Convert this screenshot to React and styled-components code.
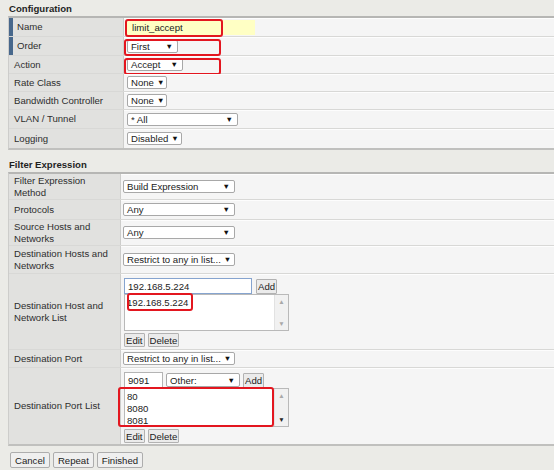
import React from "react";
import styled, { createGlobalStyle } from "styled-components";

const GlobalStyle = createGlobalStyle`
  * { box-sizing: border-box; }
  html, body { margin: 0; padding: 0; background: #ebebe7; }
  body {
    font-family: "Liberation Sans", Arial, sans-serif;
    font-size: 9.6px;
    color: #2b2b2b;
    overflow: hidden;
  }
`;

const Page = styled.div`
  width: 554px;
  height: 470px;
  overflow: hidden;
`;

const Heading = styled.div`
  font-weight: bold;
  font-size: 9.6px;
  line-height: 14px;
  padding: ${(p) => p.$top}px 0 0 9px;
  height: ${(p) => p.$top + 14}px;
  color: #1f1f1f;
`;

const Table = styled.div`
  margin-left: 8px;
  border-top: 2px solid #b6b6b4;
  border-bottom: 2px solid #c0c0be;
  border-left: 1px solid #cdcdcb;
`;

const Row = styled.div`
  display: grid;
  grid-template-columns: ${(p) => p.$label}px 1fr;
  height: ${(p) => p.$h}px;
  border-bottom: 1px solid #d8d8d6;
  &:last-child { border-bottom: none; }
`;

const Label = styled.div`
  display: flex;
  align-items: center;
  background: #e1e1df;
  border-right: 1px solid #cdcdcb;
  border-left: ${(p) => (p.$accent ? "4px solid #48688c" : "none")};
  padding: 0 4px 0 ${(p) => (p.$accent ? 4 : 5)}px;
  line-height: 12px;
  color: #2e2e2e;
`;

const Value = styled.div`
  position: relative;
  display: flex;
  flex-direction: ${(p) => (p.$stack ? "column" : "row")};
  align-items: ${(p) => (p.$stack ? "flex-start" : "center")};
  padding: ${(p) => (p.$stack ? "4px 0 0 3px" : `0 0 0 ${p.$pad ?? 3}px`)};
  background: #f5f5f5;
  box-shadow: inset 0 1px 0 #fdfdfd;
`;

const Select = styled.div`
  display: inline-flex;
  align-items: center;
  justify-content: space-between;
  width: ${(p) => p.$w}px;
  height: ${(p) => p.$h || 13}px;
  padding: 0 4px 0 3px;
  background: #fff;
  border: 1px solid #a8a8a8;
  border-radius: 2px;
  color: #222;
  white-space: nowrap;
  overflow: hidden;
  &::after {
    content: "▼";
    font-size: 7.5px;
    color: #111;
    margin-left: 3px;
  }
`;

const TextField = styled.div`
  display: flex;
  align-items: center;
  width: ${(p) => p.$w}px;
  height: ${(p) => p.$h || 16}px;
  padding-left: ${(p) => (p.$yellow ? 4 : 3)}px;
  background: ${(p) => (p.$yellow ? "#ffffc4" : "#fff")};
  border: 1px solid ${(p) => (p.$yellow ? "#ffffc4" : p.$focus ? "#86a4cf" : "#b4b4b4")};
  color: #222;
`;

const Line = styled.div`
  display: flex;
  align-items: center;
  gap: ${(p) => p.$gap ?? 3}px;
  margin-top: ${(p) => p.$mt ?? 0}px;
`;

const SmallButton = styled.div`
  display: inline-flex;
  align-items: center;
  height: ${(p) => p.$h || 14}px;
  padding: 0 1px;
  background: #ebebeb;
  border: 1px solid #b2b2b2;
  border-radius: 1px;
  color: #222;
`;

const ListBox = styled.div`
  display: flex;
  width: 165px;
  height: ${(p) => p.$h}px;
  background: #fff;
  border: 1px solid #b9b9b9;
`;

const Items = styled.div`
  flex: 1;
  padding: 2px 0 0 2px;
  line-height: 12px;
  color: #222;
`;

const ScrollBar = styled.div`
  width: 14px;
  display: flex;
  flex-direction: column;
  justify-content: space-between;
  align-items: center;
  padding: 3px 0 2px;
  background: #f1f1f1;
  border-left: 1px solid #e2e2e2;
`;

const Arrow = styled.span`
  font-size: 6.5px;
  line-height: 8px;
  color: ${(p) => (p.$dark ? "#222" : "#a8a8a8")};
`;

const Mark = styled.span`
  position: absolute;
  left: ${(p) => p.$l}px;
  top: ${(p) => p.$t}px;
  width: ${(p) => p.$w}px;
  height: ${(p) => p.$h}px;
  border: 2px solid #e3161f;
  border-radius: 3px;
  pointer-events: none;
`;

const Footer = styled.div`
  display: flex;
  gap: 3px;
  padding: 6px 0 0 10px;
`;

const Button = styled.div`
  display: inline-flex;
  align-items: center;
  height: 16px;
  padding: 0 4px;
  background: #efefef;
  border: 1px solid #adadad;
  border-radius: 2px;
  color: #222;
`;

const config = [
  { label: "Name", h: 19, accent: true },
  { label: "Order", h: 19, accent: true },
  { label: "Action", h: 18 },
  { label: "Rate Class", h: 18 },
  { label: "Bandwidth Controller", h: 18 },
  { label: "VLAN / Tunnel", h: 19 },
  { label: "Logging", h: 19 },
];

const configValue = (label) => {
  switch (label) {
    case "Name":
      return (
        <>
          <TextField $yellow $w={128} $h={15}>limit_accept</TextField>
          <Mark $l={1} $t={1} $w={98} $h={18} />
        </>
      );
    case "Order":
      return (
        <>
          <Select $w={51}>First</Select>
          <Mark $l={0} $t={2} $w={97} $h={17} />
        </>
      );
    case "Action":
      return (
        <>
          <Select $w={56}>Accept</Select>
          <Mark $l={0} $t={2} $w={97} $h={17} />
        </>
      );
    case "Rate Class":
    case "Bandwidth Controller":
      return <Select $w={40}>None</Select>;
    case "VLAN / Tunnel":
      return <Select $w={111}>* All</Select>;
    default:
      return <Select $w={55}>Disabled</Select>;
  }
};

export default function App() {
  return (
    <Page>
      <GlobalStyle />
      <Heading $top={2}>Configuration</Heading>
      <Table>
        {config.map((r) => (
          <Row key={r.label} $label={115} $h={r.h}>
            <Label $accent={r.accent}>{r.label}</Label>
            <Value>{configValue(r.label)}</Value>
          </Row>
        ))}
      </Table>

      <Heading $top={8}>Filter Expression</Heading>
      <Table>
        <Row $label={112} $h={26}>
          <Label>Filter Expression Method</Label>
          <Value $pad={2}><Select $w={112}>Build Expression</Select></Value>
        </Row>
        <Row $label={112} $h={20}>
          <Label>Protocols</Label>
          <Value $pad={2}><Select $w={112}>Any</Select></Value>
        </Row>
        <Row $label={112} $h={26}>
          <Label>Source Hosts and Networks</Label>
          <Value $pad={2}><Select $w={112}>Any</Select></Value>
        </Row>
        <Row $label={112} $h={28}>
          <Label>Destination Hosts and Networks</Label>
          <Value $pad={2}><Select $w={112}>Restrict to any in list...</Select></Value>
        </Row>
        <Row $label={112} $h={76}>
          <Label>Destination Host and Network List</Label>
          <Value $stack>
            <Line $gap={4}>
              <TextField $focus $w={128}>192.168.5.224</TextField>
              <SmallButton $h={15}>Add</SmallButton>
            </Line>
            <ListBox $h={37}>
              <Items>192.168.5.224</Items>
              <ScrollBar>
                <Arrow>▲</Arrow>
                <Arrow>▼</Arrow>
              </ScrollBar>
            </ListBox>
            <Line $mt={2}>
              <SmallButton>Edit</SmallButton>
              <SmallButton>Delete</SmallButton>
            </Line>
            <Mark $l={6} $t={19} $w={66} $h={18} />
          </Value>
        </Row>
        <Row $label={112} $h={18}>
          <Label>Destination Port</Label>
          <Value $pad={2}><Select $w={112}>Restrict to any in list...</Select></Value>
        </Row>
        <Row $label={112} $h={76}>
          <Label>Destination Port List</Label>
          <Value $stack>
            <Line>
              <TextField $w={39}>9091</TextField>
              <Select $w={74} $h={14}>Other:</Select>
              <SmallButton $h={15}>Add</SmallButton>
            </Line>
            <ListBox $h={39}>
              <Items>
                <div>80</div>
                <div>8080</div>
                <div>8081</div>
              </Items>
              <ScrollBar>
                <Arrow>▲</Arrow>
                <Arrow $dark>▼</Arrow>
              </ScrollBar>
            </ListBox>
            <Line $mt={2}>
              <SmallButton>Edit</SmallButton>
              <SmallButton>Delete</SmallButton>
            </Line>
            <Mark $l={-3} $t={19} $w={156} $h={40} />
          </Value>
        </Row>
      </Table>

      <Footer>
        <Button>Cancel</Button>
        <Button>Repeat</Button>
        <Button>Finished</Button>
      </Footer>
    </Page>
  );
}
